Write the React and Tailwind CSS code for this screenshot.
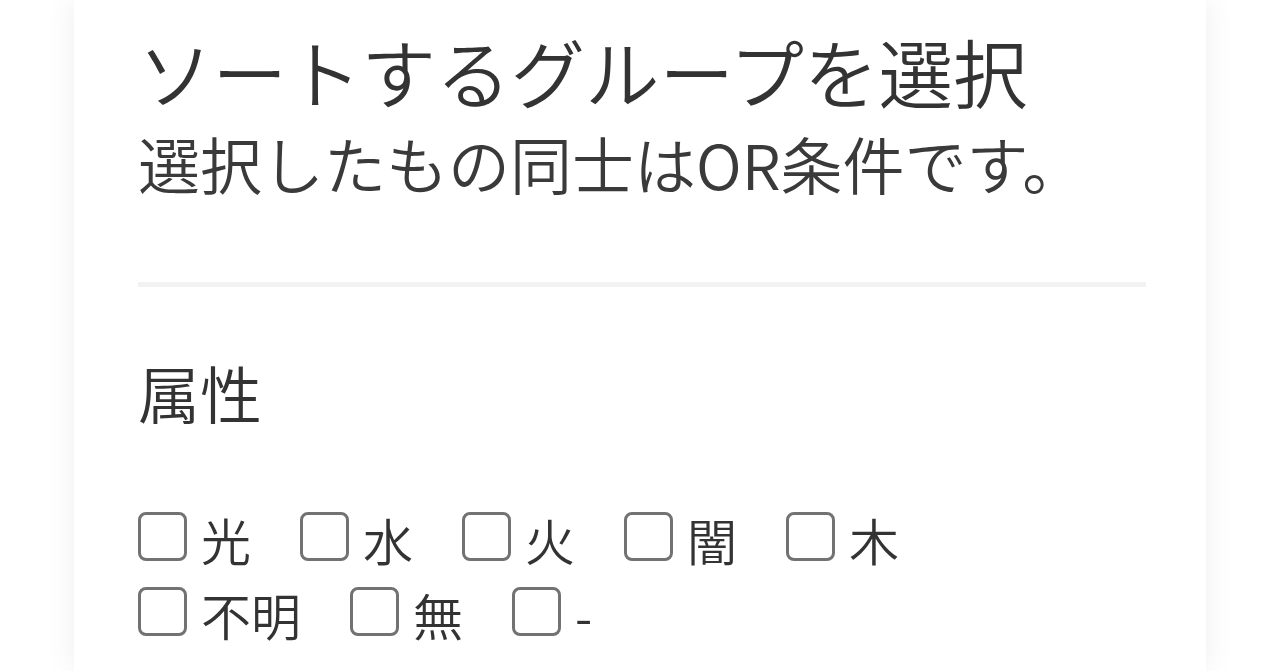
import React from "react";

const attributes = ["光", "水", "火", "闇", "木", "不明", "無", "-"];

const Checkbox = ({ label }) => (
  <label className="flex items-center h-[49px] mr-[49px] cursor-pointer">
    <span className="w-[49px] h-[49px] shrink-0 border-[3px] border-[#727272] rounded-[8px] bg-white" />
    <span className="ml-[14px] mt-[4px] text-[50px] leading-[50px] text-[#333]">
      {label}
    </span>
  </label>
);

const App = () => {
  return (
    <div className="min-h-screen bg-white font-['Noto_Sans_CJK_JP','Noto_Sans',sans-serif] font-[350] overflow-hidden">
      <div className="mx-[74px] min-h-[671px] bg-white shadow-[0_0_30px_rgba(0,0,0,0.07)] pl-[64px] pr-[60px] pt-[33px]">
        <h1 className="text-[74.5px] leading-[75px] text-[#333]">
          ソートするグループを選択
        </h1>
        <p className="mt-[24px] text-[62px] leading-[62px] text-[#3a3a3a]">
          選択したもの同士はOR条件です。
        </p>

        <div className="mt-[88px] h-[5px] bg-[#f2f2f2]" />

        <h2 className="mt-[74px] text-[62px] leading-[62px] text-[#333]">属性</h2>

        <div className="mt-[89px] flex flex-wrap gap-y-[26px]">
          {attributes.map((a) => (
            <Checkbox key={a} label={a} />
          ))}
        </div>
      </div>
    </div>
  );
};

export default App;
